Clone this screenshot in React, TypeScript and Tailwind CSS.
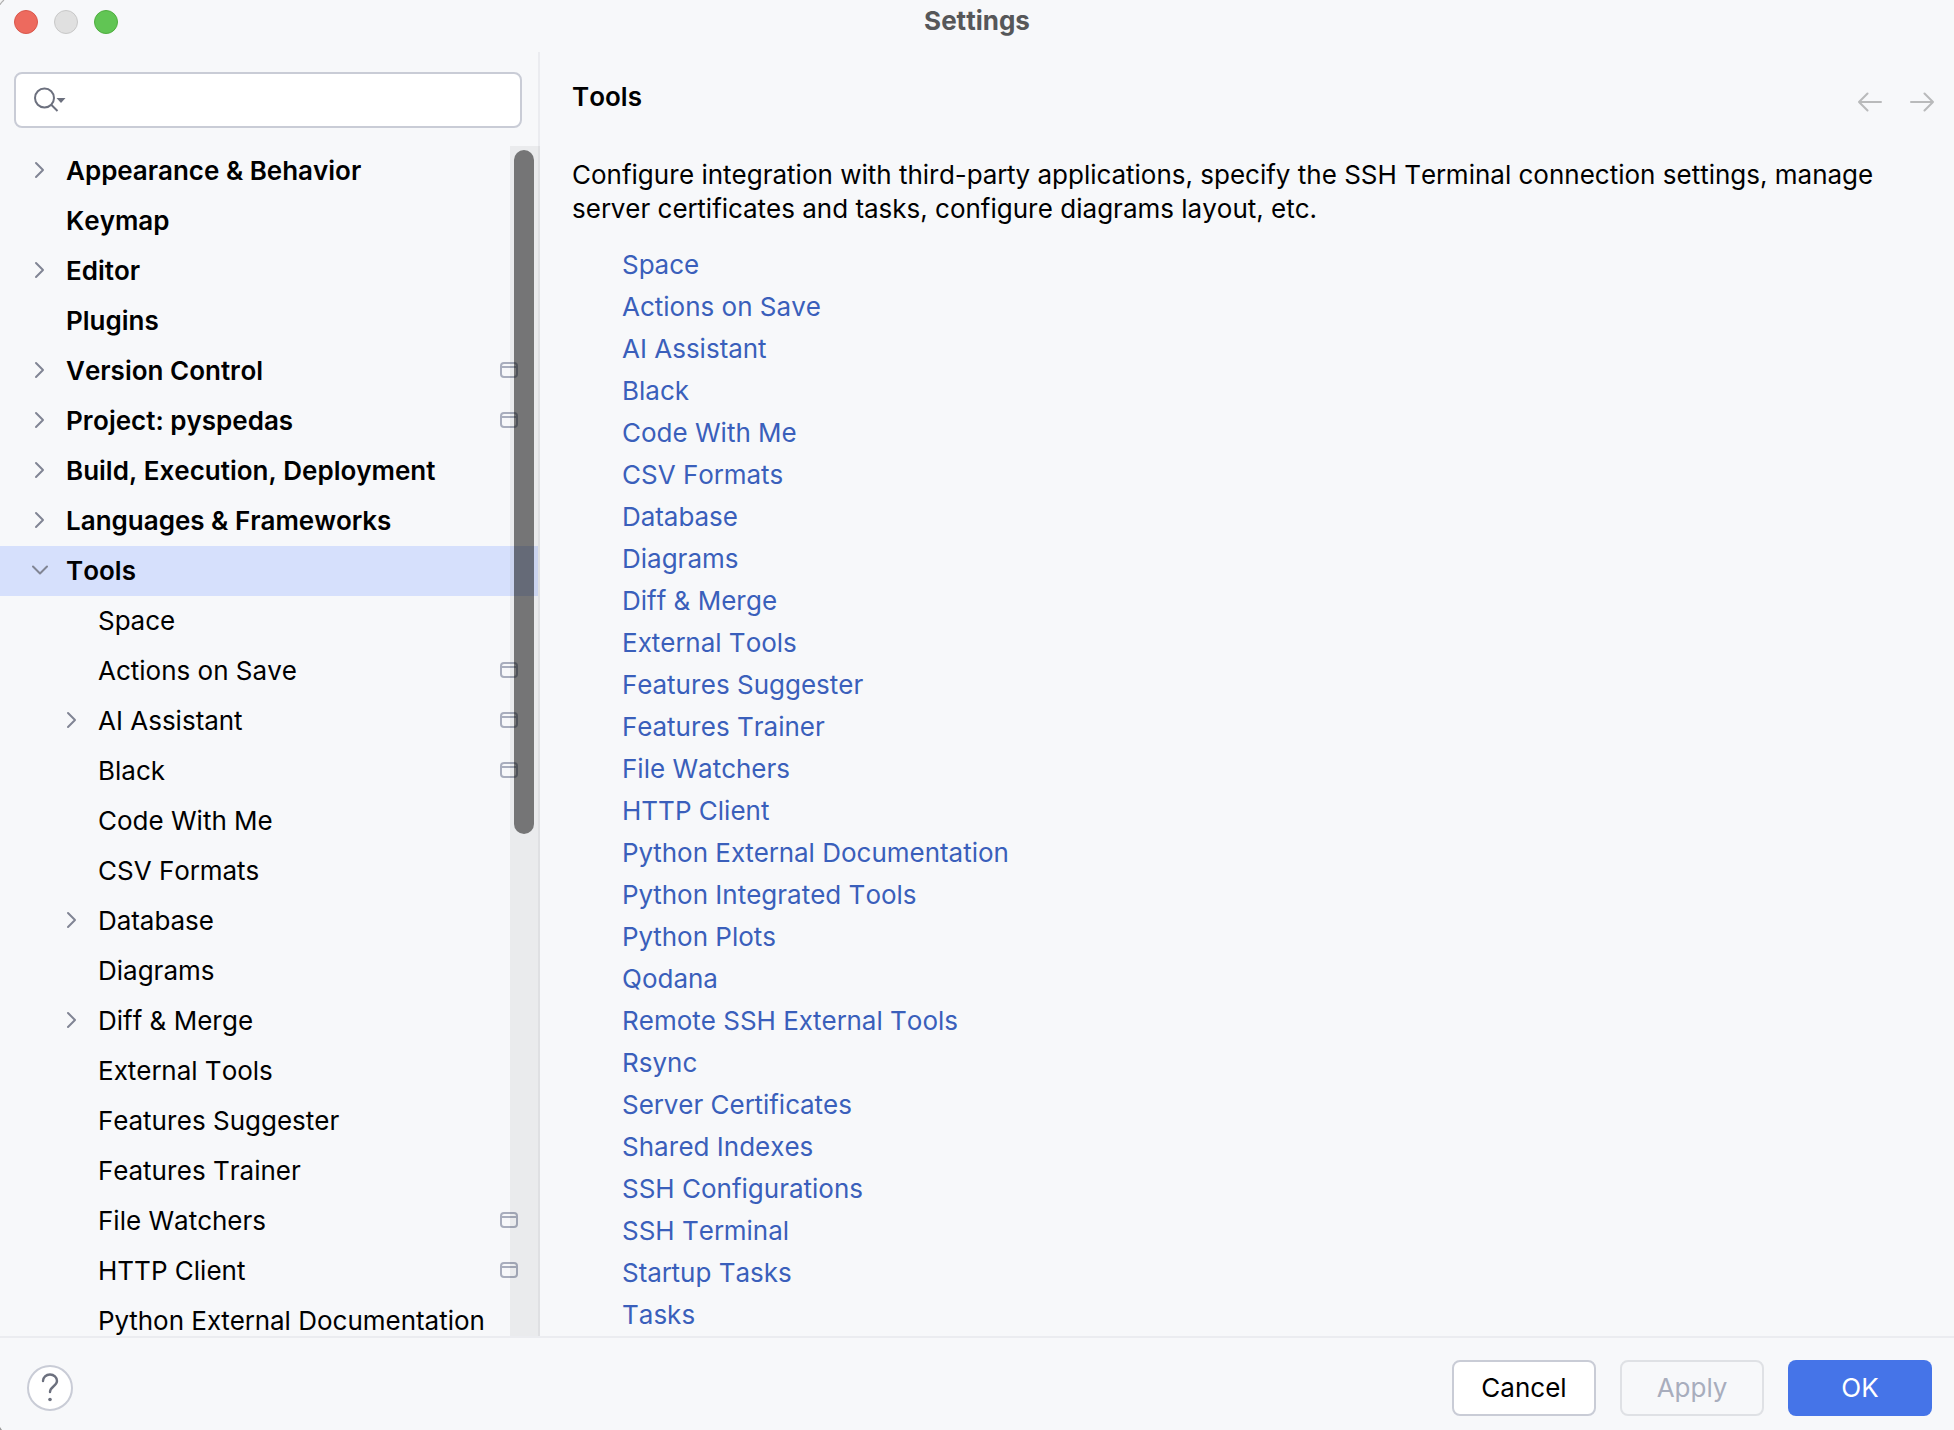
import React from "react";

type TreeItem = {
  label: string;
  level: 0 | 1;
  state?: "open" | "closed";
  project?: boolean;
  selected?: boolean;
};

const tree: TreeItem[] = [
  { label: "Appearance & Behavior", level: 0, state: "closed" },
  { label: "Keymap", level: 0 },
  { label: "Editor", level: 0, state: "closed" },
  { label: "Plugins", level: 0 },
  { label: "Version Control", level: 0, state: "closed", project: true },
  { label: "Project: pyspedas", level: 0, state: "closed", project: true },
  { label: "Build, Execution, Deployment", level: 0, state: "closed" },
  { label: "Languages & Frameworks", level: 0, state: "closed" },
  { label: "Tools", level: 0, state: "open", selected: true },
  { label: "Space", level: 1 },
  { label: "Actions on Save", level: 1, project: true },
  { label: "AI Assistant", level: 1, state: "closed", project: true },
  { label: "Black", level: 1, project: true },
  { label: "Code With Me", level: 1 },
  { label: "CSV Formats", level: 1 },
  { label: "Database", level: 1, state: "closed" },
  { label: "Diagrams", level: 1 },
  { label: "Diff & Merge", level: 1, state: "closed" },
  { label: "External Tools", level: 1 },
  { label: "Features Suggester", level: 1 },
  { label: "Features Trainer", level: 1 },
  { label: "File Watchers", level: 1, project: true },
  { label: "HTTP Client", level: 1, project: true },
  { label: "Python External Documentation", level: 1 },
];

const links = [
  "Space",
  "Actions on Save",
  "AI Assistant",
  "Black",
  "Code With Me",
  "CSV Formats",
  "Database",
  "Diagrams",
  "Diff & Merge",
  "External Tools",
  "Features Suggester",
  "Features Trainer",
  "File Watchers",
  "HTTP Client",
  "Python External Documentation",
  "Python Integrated Tools",
  "Python Plots",
  "Qodana",
  "Remote SSH External Tools",
  "Rsync",
  "Server Certificates",
  "Shared Indexes",
  "SSH Configurations",
  "SSH Terminal",
  "Startup Tasks",
  "Tasks",
];

function Chevron({ state }: { state?: "open" | "closed" }) {
  return (
    <svg width="16" height="20" viewBox="0 0 16 20" fill="none" stroke="#818594" strokeWidth="2" strokeLinecap="round" strokeLinejoin="round" className="mb-0.5 shrink-0" aria-hidden="true">
      {state === "closed" && <path d="M4 3 11 10 4 17" />}
      {state === "open" && <path d="M1 6.5 8 13.5 15 6.5" />}
    </svg>
  );
}

function ProjectIcon() {
  return (
    <svg width="18" height="16" viewBox="0 0 18 16" fill="none" stroke="#A8ADBD" strokeWidth="2" className="mb-0.5 shrink-0" aria-hidden="true">
      <rect x="1" y="1" width="16" height="14" rx="3" />
      <path d="M1 5h16" />
    </svg>
  );
}

function TreeRow({ item }: { item: TreeItem }) {
  return (
    <li>
      <button
        type="button"
        aria-expanded={item.state ? item.state === "open" : undefined}
        className={`flex h-[50px] w-full items-center gap-[18px] pr-5 text-left ${item.level === 0 ? "pl-8 font-semibold" : "pl-16"} ${item.selected ? "bg-[#d6e0fc]" : ""}`}
      >
        <Chevron state={item.state} />
        <span className="flex-1 whitespace-nowrap">{item.label}</span>
        {item.project && <ProjectIcon />}
      </button>
    </li>
  );
}

export default function App() {
  return (
    <div className="relative flex h-screen flex-col overflow-hidden bg-[#f7f8fa] font-['Inter',sans-serif] text-[26px] leading-[34px] text-black [font-kerning:none]">
      <svg width="6" height="6" viewBox="0 0 6 6" fill="none" className="absolute top-0 left-0" aria-hidden="true">
        <path d="M0 0h3.500L0 4.500z" fill="#f4f4f4" />
        <path d="M0 4.800Q1.500 2 4 0" stroke="#b0b0b0" strokeWidth="1.200" />
      </svg>
      <svg width="4" height="4" viewBox="0 0 4 4" className="absolute bottom-0 left-0" aria-hidden="true">
        <path d="M0 1 2 4H0z" fill="#999" />
      </svg>

      <header className="grid h-[52px] shrink-0 grid-cols-3 items-start px-[14px]">
        <div className="flex gap-4 pt-[10px]">
          <button type="button" aria-label="Close" className="size-6 rounded-full border border-[#d9574b] bg-[#ed6a5e]" />
          <button type="button" aria-label="Minimize" className="size-6 rounded-full border border-[#c8c8c8] bg-[#e0e0e0]" />
          <button type="button" aria-label="Zoom" className="size-6 rounded-full border border-[#4fae3f] bg-[#61c554]" />
        </div>
        <h1 className="pt-1 text-center font-bold text-[#565759]">Settings</h1>
      </header>

      <div className="flex min-h-0 flex-1">
        <aside className="flex w-[540px] shrink-0 flex-col border-r-2 border-[#ebecf0]">
          <div className="px-[14px] pt-5 pr-4">
            <label className="flex h-14 items-center rounded-lg border-2 border-[#c9ccd6] bg-white pl-[18px]">
              <svg width="34" height="28" viewBox="0 0 34 28" fill="none" className="shrink-0" aria-hidden="true">
                <circle cx="10.500" cy="12" r="9.500" stroke="#6C707E" strokeWidth="2" />
                <path d="M17 18.500 23.500 25" stroke="#6C707E" strokeWidth="2" />
                <path d="M22.500 12h9l-4.500 5z" fill="#6C707E" />
              </svg>
              <input type="text" aria-label="Search settings" className="min-w-0 flex-1 bg-transparent px-2 outline-none" />
            </label>
          </div>
          <div className="relative mt-[18px] -mr-0.5 min-h-0 flex-1 overflow-hidden">
            <ul className="mr-0.5">
              {tree.map((item) => (
                <TreeRow key={item.label} item={item} />
              ))}
            </ul>
            <div className="absolute inset-y-0 right-0 w-[30px] bg-black/5 px-1 py-1 pr-1.5">
              <div className="h-11/19 rounded-full bg-black/50" />
            </div>
          </div>
        </aside>

        <main className="min-w-0 flex-1 pr-5 pl-8">
          <div className="flex items-start justify-between pt-7">
            <h2 className="font-semibold">Tools</h2>
            <div className="flex gap-7 pt-2">
              <button type="button" aria-label="Back" disabled>
                <svg width="24" height="28" viewBox="0 0 24 28" fill="none" stroke="#b9babb" strokeWidth="2" strokeLinecap="round" strokeLinejoin="round">
                  <path d="M23 14H1M9.500 5.500 1 14l8.500 8.500" />
                </svg>
              </button>
              <button type="button" aria-label="Forward" disabled>
                <svg width="24" height="28" viewBox="0 0 24 28" fill="none" stroke="#b9babb" strokeWidth="2" strokeLinecap="round" strokeLinejoin="round">
                  <path d="M1 14h22M14.500 5.500 23 14l-8.500 8.500" />
                </svg>
              </button>
            </div>
          </div>
          <p className="pt-[42px] pr-8">
            Configure integration with third-party applications, specify the SSH Terminal connection settings, manage server certificates and tasks, configure diagrams layout, etc.
          </p>
          <ul className="flex flex-col gap-2 pt-[22px] pl-[50px]">
            {links.map((label) => (
              <li key={label}>
                <a href="#" className="text-[#3a5fbb]">{label}</a>
              </li>
            ))}
          </ul>
        </main>
      </div>

      <footer className="flex h-[94px] shrink-0 items-center justify-between border-t-2 border-[#ebecf0] pt-2 pr-[22px] pl-[27px]">
        <button type="button" aria-label="Help" className="flex size-[46px] items-center justify-center rounded-full border-2 border-[#c9ccd6] bg-white">
          <svg width="18" height="30" viewBox="0 0 18 30" fill="none" aria-hidden="true">
            <path d="M2 8a7 6.500 0 0 1 14 0c0 5-7 5.500-7 11" stroke="#6C707E" strokeWidth="2.400" strokeLinecap="round" />
            <circle cx="9" cy="26.500" r="1.800" fill="#6C707E" />
          </svg>
        </button>
        <div className="flex gap-6">
          <button type="button" className="h-14 w-36 rounded-lg border-2 border-[#c9ccd6] bg-white">Cancel</button>
          <button type="button" disabled className="h-14 w-36 rounded-lg border-2 border-[#dfe1e5] text-[#a8adbd]">Apply</button>
          <button type="button" className="h-14 w-36 rounded-lg bg-[#4574e8] text-white">OK</button>
        </div>
      </footer>
    </div>
  );
}
